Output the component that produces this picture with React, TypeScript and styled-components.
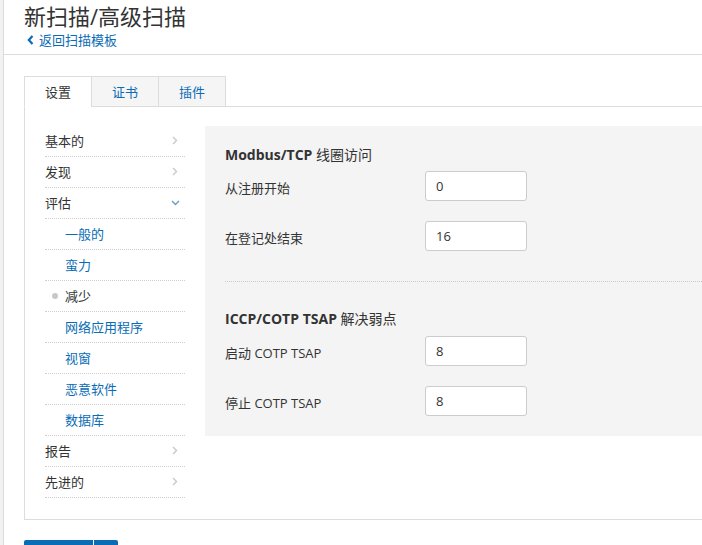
import React from "react"
import styled, { createGlobalStyle } from "styled-components"

const GlobalStyle = createGlobalStyle`
    html, body {
        margin: 0;
        padding: 0;
        background: #fff;
        overflow: hidden;
    }
    body {
        font-family: "Open Sans", "Noto Sans CJK SC", sans-serif;
        font-size: 13px;
        color: #333;
    }
`

const navItems = [
    { label: "基本的", kind: "top", arrow: "right" },
    { label: "发现", kind: "top", arrow: "right" },
    { label: "评估", kind: "top", arrow: "down" },
    { label: "一般的", kind: "sub" },
    { label: "蛮力", kind: "sub" },
    { label: "减少", kind: "current" },
    { label: "网络应用程序", kind: "sub" },
    { label: "视窗", kind: "sub" },
    { label: "恶意软件", kind: "sub" },
    { label: "数据库", kind: "sub" },
    { label: "报告", kind: "top", arrow: "right" },
    { label: "先进的", kind: "top", arrow: "right" },
]

const sections = [
    {
        title: "Modbus/TCP",
        titleCn: "线圈访问",
        rows: [
            { label: "从注册开始", value: "0" },
            { label: "在登记处结束", value: "16" },
        ],
    },
    {
        title: "ICCP/COTP TSAP",
        titleCn: "解决弱点",
        rows: [
            { label: "启动 COTP TSAP", value: "8" },
            { label: "停止 COTP TSAP", value: "8" },
        ],
    },
]

const ChevronRight = () => (
    <svg width="6" height="9" viewBox="0 0 6 9">
        <path d="M1 1 L4.5 4.5 L1 8" fill="none" stroke="#c8c8c8" strokeWidth="1.4" />
    </svg>
)

const ChevronDown = () => (
    <svg width="9" height="6" viewBox="0 0 9 6">
        <path d="M1 1 L4.5 4.5 L8 1" fill="none" stroke="#6a9cc4" strokeWidth="1.4" />
    </svg>
)

const BackChevron = () => (
    <svg width="7" height="10" viewBox="0 0 7 10">
        <path d="M5.5 1 L1.8 5 L5.5 9" fill="none" stroke="#0a6cb5" strokeWidth="2.2" />
    </svg>
)

export default function App() {
    return (<>
        <GlobalStyle />
        <Page>
            <Rail />
            <Main>
                <Header>
                    <Title>新扫描/高级扫描</Title>
                    <BackLink><BackChevron />返回扫描模板</BackLink>
                </Header>
                <Content>
                    <TabBar>
                        <Tab $active>设置</Tab>
                        <Tab>证书</Tab>
                        <Tab>插件</Tab>
                    </TabBar>
                    <Panel>
                        <Nav>
                            {navItems.map((item) => (
                                <NavItem key={item.label} $kind={item.kind}>
                                    {item.kind === "current" && <Dot />}
                                    <span>{item.label}</span>
                                    {item.arrow === "right" && <Arrow><ChevronRight /></Arrow>}
                                    {item.arrow === "down" && <Arrow><ChevronDown /></Arrow>}
                                </NavItem>
                            ))}
                        </Nav>
                        <Settings>
                            {sections.map((s) => (
                                <Section key={s.title}>
                                    <SectionTitle><b>{s.title}</b> {s.titleCn}</SectionTitle>
                                    {s.rows.map((r) => (
                                        <Row key={r.label}>
                                            <Label>{r.label}</Label>
                                            <Input defaultValue={r.value} />
                                        </Row>
                                    ))}
                                </Section>
                            ))}
                        </Settings>
                    </Panel>
                    <Buttons>
                        <SaveButton />
                        <CaretButton />
                    </Buttons>
                </Content>
            </Main>
        </Page>
    </>)
}

const Page = styled.div`
    display: flex;
    width: 702px;
    height: 545px;
    overflow: hidden;
`

const Rail = styled.div`
    width: 3px;
    flex-shrink: 0;
    background: #f2f2f2;
    border-right: 1px solid #dcdcdc;
`

const Main = styled.div`
    flex: 1;
    min-width: 0;
`

const Header = styled.div`
    box-sizing: border-box;
    height: 55px;
    padding: 3px 0 0 20px;
    border-bottom: 1px solid #dcdcdc;
`

const Title = styled.h1`
    margin: 0;
    font-size: 22px;
    font-weight: 400;
    line-height: 27px;
    color: #333;
`

const BackLink = styled.a`
    display: flex;
    align-items: center;
    gap: 5px;
    padding-left: 3px;
    color: #0a6cb5;
    font-size: 13px;
    line-height: 20px;
    cursor: pointer;
`

const Content = styled.div`
    padding: 21px 0 0 20px;
`

const TabBar = styled.div`
    display: flex;
    height: 30px;
    border-bottom: 1px solid #dcdcdc;
`

const Tab = styled.div<{ $active?: boolean }>`
    box-sizing: border-box;
    width: 68px;
    height: 31px;
    display: flex;
    align-items: center;
    justify-content: center;
    border: 1px solid #dcdcdc;
    border-bottom-color: ${p => p.$active ? "#fff" : "#dcdcdc"};
    background: ${p => p.$active ? "#fff" : "#f5f5f5"};
    color: ${p => p.$active ? "#333" : "#0a6cb5"};
    font-size: 13px;
    & + & {
        margin-left: -1px;
    }
`

const Panel = styled.div`
    display: flex;
    gap: 20px;
    align-items: flex-start;
    padding: 19px 0 21px 20px;
    border-left: 1px solid #dcdcdc;
    border-bottom: 1px solid #dcdcdc;
`

const Nav = styled.div`
    width: 140px;
    flex-shrink: 0;
`

const NavItem = styled.div<{ $kind: string }>`
    position: relative;
    display: flex;
    align-items: center;
    height: 31px;
    box-sizing: border-box;
    padding-left: ${p => p.$kind === "top" ? "0" : "20px"};
    padding-bottom: 1px;
    border-bottom: 1px dotted #cfcfcf;
    color: ${p => p.$kind === "sub" ? "#0a6cb5" : "#333"};
    font-size: 13px;
    span {
        flex: 1;
    }
`

const Dot = styled.i`
    position: absolute;
    left: 7px;
    top: 12px;
    width: 6px;
    height: 6px;
    border-radius: 50%;
    background: #c8c8c8;
`

const Arrow = styled.div`
    width: 14px;
    display: flex;
    justify-content: center;
    margin-right: 3px;
`

const Settings = styled.div`
    flex: 1;
    background: #f4f4f4;
    padding: 20px 0 20px 20px;
`

const Section = styled.div`
    & + & {
        margin-top: 30px;
        padding-top: 28px;
        border-top: 1px dotted #c8c8c8;
    }
`

const SectionTitle = styled.div`
    font-size: 14px;
    line-height: 18px;
    margin-bottom: 7px;
    color: #333;
    b {
        font-weight: 700;
    }
    ${Section} + ${Section} & {
        margin-bottom: 8px;
    }
`

const Row = styled.div`
    display: flex;
    align-items: center;
    height: 30px;
    & + & {
        margin-top: 20px;
    }
`

const Label = styled.div`
    width: 200px;
    padding-top: 3px;
    line-height: 18px;
    font-size: 13px;
    color: #333;
`

const Input = styled.input`
    box-sizing: border-box;
    width: 102px;
    height: 30px;
    padding: 0 10px;
    border: 1px solid #cccccc;
    border-radius: 3px;
    background: #fff;
    font-family: "Open Sans", sans-serif;
    font-size: 13px;
    color: #333;
    outline: none;
`

const Buttons = styled.div`
    display: flex;
    gap: 1px;
    margin-top: 20px;
`

const SaveButton = styled.div`
    width: 69px;
    height: 32px;
    background: #0a6cb5;
    border-radius: 2px 0 0 2px;
`

const CaretButton = styled.div`
    width: 24px;
    height: 32px;
    background: #0a6cb5;
    border-radius: 0 2px 2px 0;
`
